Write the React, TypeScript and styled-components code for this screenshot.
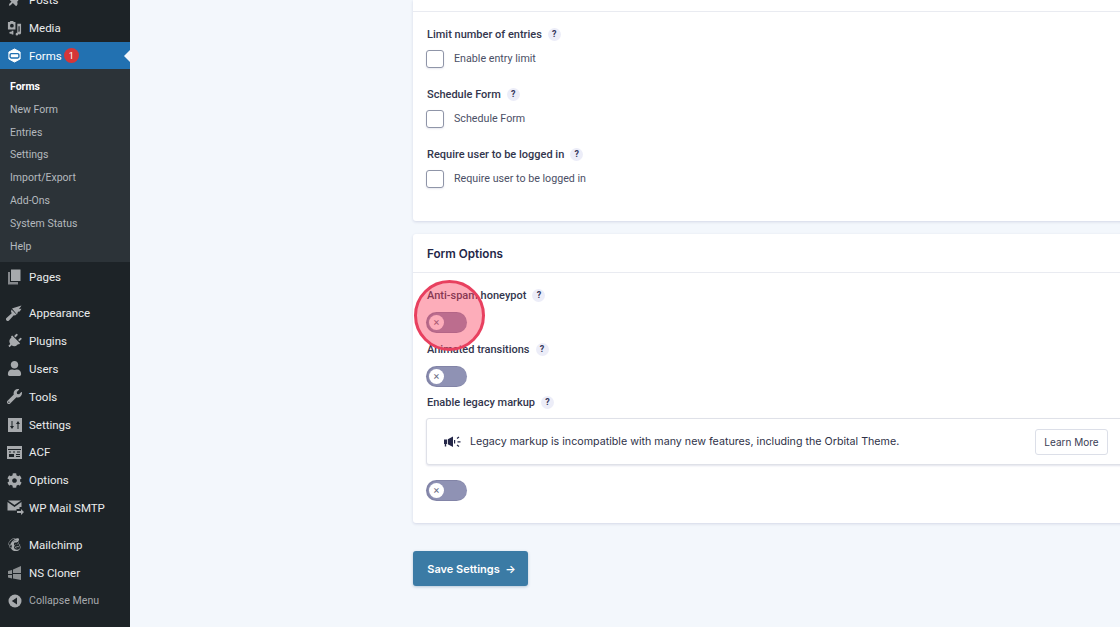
import React from "react";
import styled, { createGlobalStyle } from "styled-components";
import { FaCog, FaMailchimp, FaPlug, FaThumbtack, FaUser, FaWrench } from "react-icons/fa";

const GlobalStyle = createGlobalStyle`
  html, body {
    margin: 0;
    padding: 0;
    height: 627px;
    overflow: hidden;
    background: #f3f7fc;
  }
  * { box-sizing: border-box; }
`;

const Page = styled.div`
  position: relative;
  display: flex;
  width: 1120px;
  height: 627px;
  overflow: hidden;
  background: #f3f7fc;
`;

const Sidebar = styled.nav`
  flex: 0 0 130px;
  height: 627px;
  overflow: hidden;
  background: #1d2327;
  font-family: Roboto, "Open Sans", sans-serif;
`;

const MenuList = styled.div`
  margin-top: -14px;
  display: flex;
  flex-direction: column;
`;

const MenuItem = styled.div<{ $active?: boolean; $gapTop?: number; $muted?: boolean }>`
  position: relative;
  display: flex;
  align-items: center;
  height: 27.8px;
  margin-top: ${(p) => p.$gapTop ?? 0}px;
  padding: 0.5px 0 0 7px;
  gap: 7px;
  white-space: nowrap;
  color: ${(p) => (p.$active ? "#fff" : p.$muted ? "#a7aaad" : "#eaeced")};
  background: ${(p) => (p.$active ? "#2271b1" : "transparent")};
  font-size: ${(p) => (p.$muted ? "10.6px" : "11.5px")};
`;

const IconSlot = styled.span<{ $active?: boolean; $tilt?: boolean }>`
  flex: 0 0 15px;
  width: 15px;
  height: 16px;
  display: flex;
  align-items: center;
  justify-content: center;
  color: ${(p) => (p.$active ? "#fff" : "#a7aaad")};
  font-size: 15px;
  transform: ${(p) => (p.$tilt ? "rotate(45deg)" : "none")};
`;

const Badge = styled.span`
  display: inline-flex;
  align-items: center;
  justify-content: center;
  width: 15px;
  height: 15px;
  margin-left: -5px;
  border-radius: 50%;
  background: #d63638;
  color: #fff;
  font-size: 9px;
`;

const ActiveArrow = styled.span`
  position: absolute;
  right: 0;
  top: 8px;
  border: 6px solid transparent;
  border-right-color: #f3f7fc;
  border-left-width: 0;
`;

const SubMenu = styled.div`
  display: flex;
  flex-direction: column;
  height: 193px;
  padding-top: 5.4px;
  background: #2c3338;
`;

const SubItem = styled.div<{ $current?: boolean }>`
  height: 22.9px;
  padding-left: 10px;
  display: flex;
  align-items: center;
  font-size: 10.5px;
  font-weight: ${(p) => (p.$current ? 700 : 400)};
  color: ${(p) => (p.$current ? "#fff" : "#b4b9be")};
`;

const Main = styled.main`
  flex: 1;
  min-width: 0;
  padding-left: 283px;
  font-family: Roboto, "Noto Sans", sans-serif;
  color: #242748;
`;

const Card = styled.section`
  width: 760px;
  background: #fff;
  box-shadow: 0 1px 3px rgba(18, 25, 97, 0.14);
  border-radius: 3px;
`;

const TopCard = styled(Card)`
  height: 221px;
  padding-top: 11px;
  border-radius: 0 0 3px 3px;
`;

const OptionsCard = styled(Card)`
  height: 289px;
  margin-top: 13px;
`;

const TopRule = styled.div`
  height: 1px;
  background: #e9ebf1;
`;

const SettingsBody = styled.div`
  padding: 14px 14px 0;
  display: flex;
  flex-direction: column;
  gap: 18px;
`;

const Field = styled.div`
  display: flex;
  flex-direction: column;
  gap: 7px;
`;

const Label = styled.div`
  display: flex;
  align-items: center;
  gap: 6px;
  height: 16px;
  font-size: 11px;
  font-weight: 500;
  color: #33364d;
`;

const Help = styled.span`
  display: inline-flex;
  align-items: center;
  justify-content: center;
  width: 13px;
  height: 13px;
  border-radius: 50%;
  background: #ecedf8;
  color: #33365a;
  font-size: 9px;
  font-weight: 700;
`;

const CheckRow = styled.label`
  display: flex;
  align-items: center;
  gap: 10px;
  height: 19px;
  margin-left: -1px;
  font-size: 10.7px;
  color: #4b4f66;
`;

const Box = styled.span`
  width: 18px;
  height: 18px;
  background: #fff;
  border: 1px solid #8f95a8;
  border-radius: 3px;
  box-shadow: 0 1px 2px rgba(18, 25, 97, 0.1);
`;

const CardHeader = styled.header`
  height: 39px;
  padding: 1px 0 0 14px;
  display: flex;
  align-items: center;
  border-bottom: 1px solid #e9ebf1;
  font-family: Inter, "Noto Sans", sans-serif;
  font-size: 11.7px;
  font-weight: 600;
  color: #242748;
`;

const OptionsBody = styled.div`
  padding: 14px 14px 0;
  display: flex;
  flex-direction: column;
`;

const Toggle = styled.span<{ $gapTop: number }>`
  display: flex;
  align-items: center;
  width: 41px;
  height: 21px;
  margin: ${(p) => p.$gapTop}px 0 0 -1px;
  padding-left: 3px;
  border-radius: 11px;
  background: #8f92b4;
  box-shadow: inset 1px 0 0 1px rgba(70, 70, 110, 0.18);
`;

const Knob = styled.span`
  display: inline-flex;
  align-items: center;
  justify-content: center;
  width: 15px;
  height: 15px;
  border-radius: 50%;
  background: #fff;
  color: #6d7087;
  font-size: 11px;
  line-height: 1;
`;

const Spacer = styled.div<{ $h: number }>`
  height: ${(p) => p.$h}px;
`;

const Notice = styled.div`
  display: flex;
  align-items: center;
  height: 47px;
  width: 722px;
  margin: 8px 0 0 -1px;
  padding: 0 39px 0 17px;
  background: #fff;
  border: 1px solid #dfe1e8;
  border-radius: 3px;
  box-shadow: 0 1px 2px rgba(18, 25, 97, 0.12);
  font-family: Inter, "Noto Sans", sans-serif;
  font-size: 10.7px;
  color: #2f3248;
`;

const NoticeIcon = styled.span`
  display: flex;
  align-items: center;
  width: 26px;
  color: #242748;
`;

const NoticeText = styled.span`
  flex: 1;
`;

const LearnMore = styled.button`
  width: 73px;
  height: 26px;
  padding: 0;
  background: #fff;
  border: 1px solid #dcdfe8;
  border-radius: 3px;
  font-family: Inter, "Noto Sans", sans-serif;
  font-size: 10px;
  color: #3a3d55;
`;

const SaveButton = styled.button`
  display: block;
  width: 115px;
  height: 35px;
  margin-top: 28px;
  padding: 0 0 0 2px;
  background: #3b7ba5;
  border: none;
  border-radius: 3px;
  box-shadow: 0 1px 3px rgba(40, 90, 130, 0.3);
  color: #fff;
  font-family: Inter, "Noto Sans", sans-serif;
  font-size: 11px;
  font-weight: 600;
`;

const Highlight = styled.div`
  position: absolute;
  left: 414px;
  top: 280px;
  width: 71px;
  height: 71px;
  border-radius: 50%;
  background: rgba(250, 60, 90, 0.42);
  border: 3px solid #e8405f;
`;

const FormsIcon = () => (
  <svg width="15" height="15" viewBox="0 0 16 16">
    <path fill="#fff" stroke="#fff" strokeLinejoin="round" d="M8 1l6 3.300v7.400L8 15l-6-3.300V4.300z" />
    <rect x="3.300" y="6" width="9.400" height="4.600" rx="1.200" fill="none" stroke="#2271b1" strokeWidth="1.500" />
  </svg>
);

const MediaIcon = () => (
  <svg width="16" height="16" viewBox="0 0 16 16">
    <path fill="currentColor" d="M1 1.500h2l.6-1h3l.6 1h1.800v8H1z" />
    <circle cx="5.200" cy="5.500" r="2" fill="#1d2327" />
    <path fill="currentColor" d="M5 11h1.800v4H5zM5 14h-1.500a1 1 0 010-2H5zM11 3.500h4v9.800a1.500 1.500 0 11-1.500-1.500V6H12.200v8.500a1.500 1.500 0 11-1.200-1.400z" />
  </svg>
);

const PagesIcon = () => (
  <svg width="15" height="16" viewBox="0 0 15 16">
    <path fill="currentColor" opacity=".75" d="M1 3h2v10h8v2.500H1z" />
    <path fill="currentColor" d="M4 .5h9.500V12H4z" />
  </svg>
);

const BrushIcon = () => (
  <svg width="16" height="16" viewBox="0 0 16 16" style={{ marginLeft: -1 }}>
    <path fill="currentColor" d="M6 3.500L9 2.500 15.500.5 13 4l2.500-.3-1.800 2.800L12 6.800 11 9.500z" />
    <path fill="currentColor" d="M5.500 4.500l5 5-1.500 1-1.200-.2L3 15.500a1.500 1.500 0 01-2.500-2.500L5.700 8.200 5 6.500z" />
  </svg>
);

const SlidersIcon = () => (
  <svg width="14" height="14" viewBox="0 0 14 14">
    <path fill="currentColor" d="M0 0h14v14H0z" />
    <path fill="#1d2327" d="M3.500 3h1v5H6L4 11 2 8h1.500zM9.500 11h1V6H12l-2-3-2 3h1.500z" />
  </svg>
);

const TableIcon = () => (
  <svg width="15" height="13" viewBox="0 0 15 13">
    <path fill="currentColor" d="M0 0h15v13H0z" />
    <path fill="#1d2327" d="M1 3h13v1H1zM2 5.500h2v1H2zM6 5.500h2v1H6zM10 5.500h3v1h-3zM2 8h5v3H2zM9 8h4v1H9zM9 10h4v1H9z" />
  </svg>
);

const MailIcon = () => (
  <svg width="17" height="15" viewBox="0 0 17 15" style={{ marginRight: -2, flexShrink: 0 }}>
    <path fill="currentColor" d="M1 .500L7.500 5 14 .500zM.500 2v8.500h9V9h3V7h2V2L7.500 7z" />
    <path fill="currentColor" d="M10 11h4V9l3 3-3 3v-2h-4z" />
  </svg>
);

const ClonerIcon = () => (
  <svg width="14" height="15" viewBox="0 0 14 15">
    <path fill="currentColor" opacity=".8" d="M0 6l4-1v4H0zM0 10h4v3.500L0 12.500zM5 4.500L13 1v7H5zM5 9h8v6l-8-1.500z" />
  </svg>
);

const CollapseIcon = () => (
  <svg width="14" height="14" viewBox="0 0 14 14">
    <circle cx="7" cy="7" r="6.500" fill="currentColor" />
    <path fill="#1d2327" d="M9 3.500v7L3.800 7z" />
  </svg>
);

const MegaphoneIcon = () => (
  <svg width="18" height="12" viewBox="0 0 18 12">
    <path fill="currentColor" d="M0 3.500h3V8H2.200v2.500H.8V8H0zM3.800 3.300L9 .5v10.500L3.800 8.200zM10 4h1.200v3.500H10z" />
    <path fill="none" stroke="currentColor" strokeWidth="1.200" d="M13 2.500l2-1.500M13.500 5.800h3M13 9l2 1.500" />
  </svg>
);

type Entry = {
  label: string;
  icon: React.ReactNode;
  gapTop?: number;
  tilt?: boolean;
};

const beforeForms: Entry[] = [
  { label: "Posts", icon: <FaThumbtack />, tilt: true },
  { label: "Media", icon: <MediaIcon /> },
];

const subItems = ["Forms", "New Form", "Entries", "Settings", "Import/Export", "Add-Ons", "System Status", "Help"];

const afterForms: Entry[] = [
  { label: "Pages", icon: <PagesIcon /> },
  { label: "Appearance", icon: <BrushIcon />, gapTop: 9 },
  { label: "Plugins", icon: <FaPlug />, tilt: true },
  { label: "Users", icon: <FaUser /> },
  { label: "Tools", icon: <FaWrench /> },
  { label: "Settings", icon: <SlidersIcon /> },
  { label: "ACF", icon: <TableIcon /> },
  { label: "Options", icon: <FaCog /> },
  { label: "WP Mail SMTP", icon: <MailIcon /> },
  { label: "Mailchimp", icon: <FaMailchimp />, gapTop: 9 },
  { label: "NS Cloner", icon: <ClonerIcon /> },
];

const checkFields = ["Limit number of entries", "Schedule Form", "Require user to be logged in"];
const checkLabels = ["Enable entry limit", "Schedule Form", "Require user to be logged in"];

function HelpLabel({ text }: { text: string }) {
  return (
    <Label>
      {text}
      <Help>?</Help>
    </Label>
  );
}

function OffToggle({ gapTop }: { gapTop: number }) {
  return (
    <Toggle $gapTop={gapTop}>
      <Knob>×</Knob>
    </Toggle>
  );
}

export default function App() {
  return (
    <Page>
      <GlobalStyle />
      <Sidebar>
        <MenuList>
          {beforeForms.map((item) => (
            <MenuItem key={item.label}>
              <IconSlot $tilt={item.tilt}>{item.icon}</IconSlot>
              {item.label}
            </MenuItem>
          ))}
          <MenuItem $active>
            <IconSlot $active>
              <FormsIcon />
            </IconSlot>
            Forms
            <Badge>1</Badge>
            <ActiveArrow />
          </MenuItem>
          <SubMenu>
            {subItems.map((label, i) => (
              <SubItem key={label} $current={i === 0}>
                {label}
              </SubItem>
            ))}
          </SubMenu>
          {afterForms.map((item) => (
            <MenuItem key={item.label} $gapTop={item.gapTop}>
              <IconSlot $tilt={item.tilt}>{item.icon}</IconSlot>
              {item.label}
            </MenuItem>
          ))}
          <MenuItem $muted $gapTop={0.5}>
            <IconSlot>
              <CollapseIcon />
            </IconSlot>
            Collapse Menu
          </MenuItem>
        </MenuList>
      </Sidebar>
      <Main>
        <TopCard>
          <TopRule />
          <SettingsBody>
            {checkFields.map((field, i) => (
              <Field key={field}>
                <HelpLabel text={field} />
                <CheckRow>
                  <Box />
                  {checkLabels[i]}
                </CheckRow>
              </Field>
            ))}
          </SettingsBody>
        </TopCard>
        <OptionsCard>
          <CardHeader>Form Options</CardHeader>
          <OptionsBody>
            <HelpLabel text="Anti-spam honeypot" />
            <OffToggle gapTop={9} />
            <Spacer $h={8} />
            <HelpLabel text="Animated transitions" />
            <OffToggle gapTop={9} />
            <Spacer $h={7} />
            <HelpLabel text="Enable legacy markup" />
            <Notice>
              <NoticeIcon>
                <MegaphoneIcon />
              </NoticeIcon>
              <NoticeText>Legacy markup is incompatible with many new features, including the Orbital Theme.</NoticeText>
              <LearnMore>Learn More</LearnMore>
            </Notice>
            <OffToggle gapTop={15} />
          </OptionsBody>
        </OptionsCard>
        <SaveButton>Save Settings &nbsp;→</SaveButton>
      </Main>
      <Highlight />
    </Page>
  );
}
